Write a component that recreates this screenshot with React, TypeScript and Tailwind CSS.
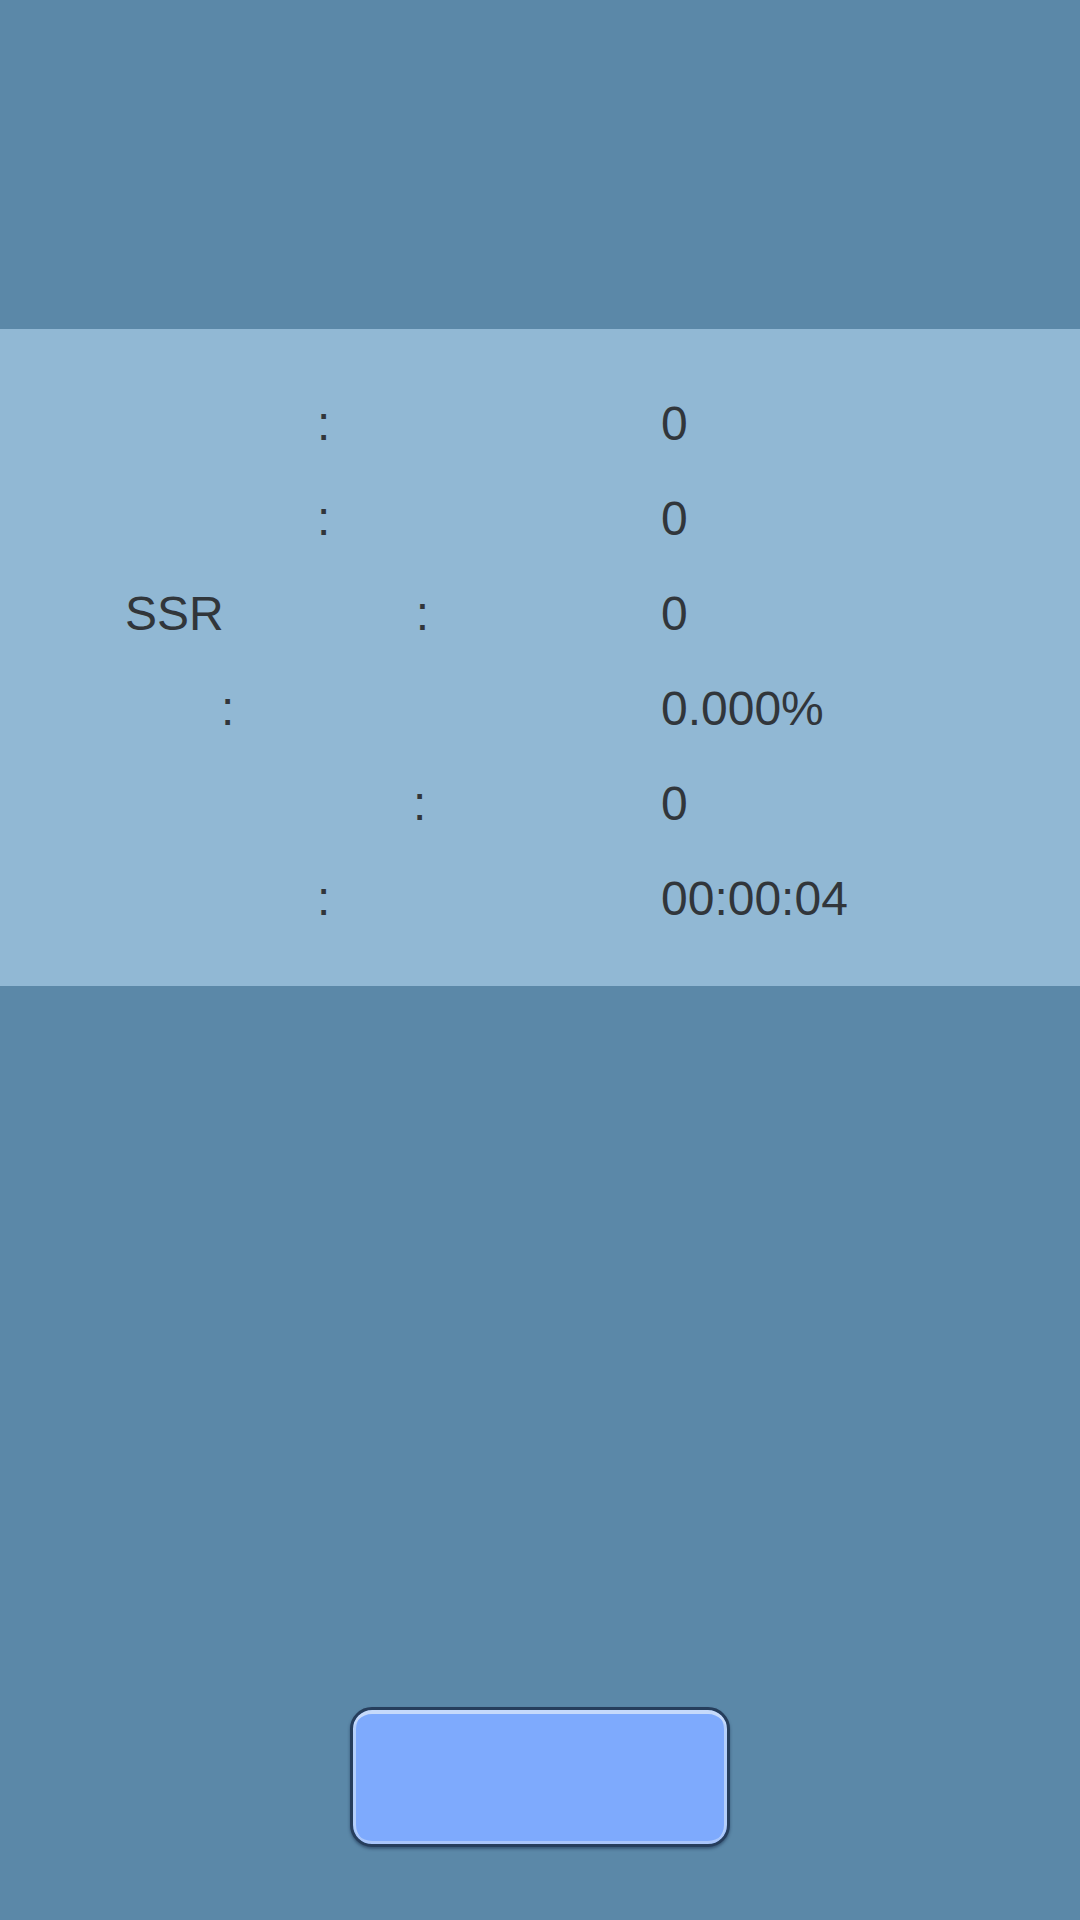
import React from "react";

const rows: { label?: string; gap: number; value: string }[] = [
  { gap: 192, value: "0" },
  { gap: 192, value: "0" },
  { label: "SSR", gap: 192, value: "0" },
  { gap: 96, value: "0.000%" },
  { gap: 288, value: "0" },
  { gap: 192, value: "00:00:04" },
];

const StatRow: React.FC<{ label?: string; gap: number; value: string }> = ({ label, gap, value }) => {
  return (
    <div className="flex items-center h-[95px] leading-[95px]">
      <div className="w-[661px] shrink-0 pl-[125px] flex items-center whitespace-pre">
        {label && <span>{label}</span>}
        <span className="inline-block" style={{ width: gap }} />
        <span>:</span>
      </div>
      <div className="whitespace-pre">{value}</div>
    </div>
  );
};

export default function App() {
  return (
    <div
      className="w-[1080px] h-[1920px] bg-[#5b88a8] flex flex-col overflow-hidden"
      style={{ fontFamily: '"Liberation Sans", Arial, sans-serif' }}
    >
      <div className="mt-[329px] h-[657px] bg-[#91b8d4] pt-[47px] text-[48px] text-[#31363b]">
        {rows.map((r, i) => (
          <StatRow key={i} label={r.label} gap={r.gap} value={r.value} />
        ))}
      </div>
      <div className="mt-[721px] flex justify-center">
        <button className="w-[380px] h-[140px] rounded-[22px] border-[3px] border-[#263e5c] bg-[#7eaafd] shadow-[inset_0_4px_0_#c6dafb,inset_0_-3px_0_#a9c6fb,inset_3px_0_0_#b4cffb,inset_-3px_0_0_#b4cffb,0_2px_3px_rgba(20,40,70,0.5)]" />
      </div>
    </div>
  );
}
